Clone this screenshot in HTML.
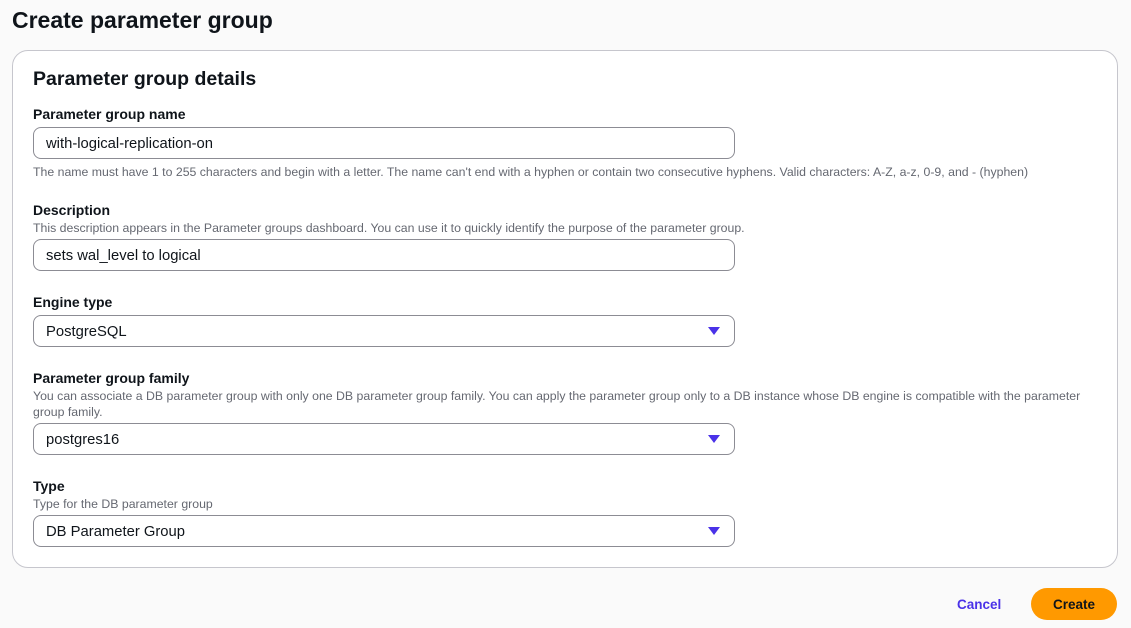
<!DOCTYPE html>
<html><head><style>
body{margin:0;width:1131px;height:628px;background:#fafafa;font-family:"Liberation Sans",sans-serif;color:#0f141a;position:relative;overflow:hidden}
.a{position:absolute;white-space:nowrap}
h1{position:absolute;left:12px;top:5px;margin:0;font-size:23px;font-weight:bold;line-height:30px}
.card{position:absolute;left:12px;top:50px;width:1104px;height:516px;background:#fff;border:1px solid #c6c6cd;border-radius:16px}
.h2{font-size:19.5px;font-weight:bold;left:33px;top:68px}
.lab{font-size:14px;font-weight:bold;left:33px;line-height:16px}
.hint{font-size:12.3px;color:#656871;left:33px;line-height:16px}
.in{position:absolute;left:33px;width:700px;height:30px;border:1px solid #8c8c94;border-radius:8px;background:#fff;font-size:14.8px;line-height:33px;box-sizing:content-box}
.in span{position:absolute;left:12px}
.in i{position:absolute;right:14px;top:11px;width:0;height:0;border-left:6px solid transparent;border-right:6px solid transparent;border-top:8px solid #4a32e8}
</style></head><body>
<h1>Create parameter group</h1>
<div class="card"></div>
<div class="a h2">Parameter group details</div>
<div class="a lab" style="top:106px">Parameter group name</div>
<div class="in" style="top:127px"><span>with-logical-replication-on</span></div>
<div class="a hint" style="top:164px">The name must have 1 to 255 characters and begin with a letter. The name can't end with a hyphen or contain two consecutive hyphens. Valid characters: A-Z, a-z, 0-9, and - (hyphen)</div>
<div class="a lab" style="top:202px">Description</div>
<div class="a hint" style="top:220px">This description appears in the Parameter groups dashboard. You can use it to quickly identify the purpose of the parameter group.</div>
<div class="in" style="top:239px"><span>sets wal_level to logical</span></div>
<div class="a lab" style="top:294px">Engine type</div>
<div class="in" style="top:315px"><span>PostgreSQL</span><i></i></div>
<div class="a lab" style="top:370px">Parameter group family</div>
<div class="a hint" style="top:388px">You can associate a DB parameter group with only one DB parameter group family. You can apply the parameter group only to a DB instance whose DB engine is compatible with the parameter</div>
<div class="a hint" style="top:404px">group family.</div>
<div class="in" style="top:423px"><span>postgres16</span><i></i></div>
<div class="a lab" style="top:478px">Type</div>
<div class="a hint" style="top:496px">Type for the DB parameter group</div>
<div class="in" style="top:515px"><span>DB Parameter Group</span><i></i></div>
<div class="a" style="left:957px;top:597px;font-size:13.5px;font-weight:bold;color:#4a32e8">Cancel</div>
<div class="a" style="left:1031px;top:588px;width:86px;height:32px;border-radius:16px;background:#ff9900;font-size:13.5px;font-weight:bold;text-align:center;line-height:34px">Create</div>
</body></html>
